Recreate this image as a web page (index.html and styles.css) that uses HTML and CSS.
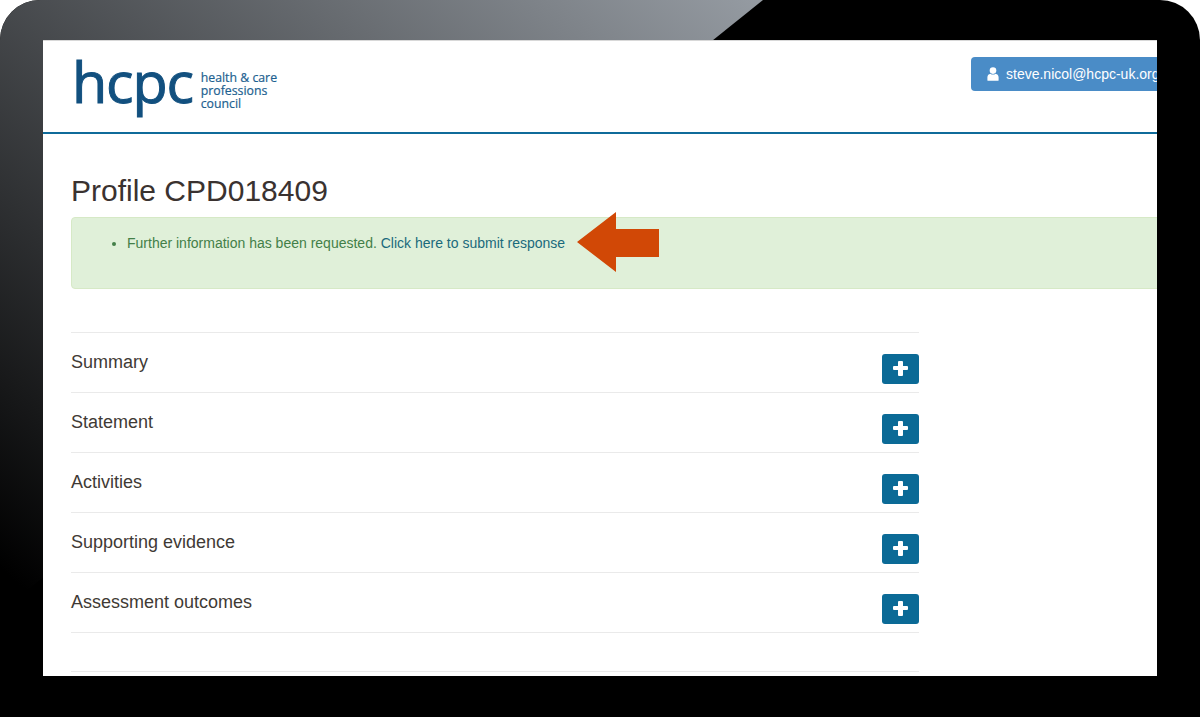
FILE: index.html
```html
<!DOCTYPE html>
<html lang="en">
<head>
<meta charset="utf-8">
<title>Profile CPD018409</title>
<link rel="stylesheet" href="styles.css">
</head>
<body>
<div class="frame">
  <svg class="sheen" width="1200" height="717" viewBox="0 0 1200 717" aria-hidden="true">
    <defs>
      <linearGradient id="sheen" gradientUnits="userSpaceOnUse" x1="760" y1="0" x2="170" y2="710">
        <stop offset="0" stop-color="#959ba2"/>
        <stop offset="1" stop-color="#000"/>
      </linearGradient>
    </defs>
    <polygon points="0,0 763,0 0,612" fill="url(#sheen)"/>
  </svg>
  <div class="screen">
    <header class="topbar">
      <div class="logo">
        <span class="logo-mark">hcpc</span>
        <span class="logo-text">health &amp; care<br>professions<br>council</span>
      </div>
      <a class="user-btn" href="#">
        <svg class="user-icon" width="12" height="14" viewBox="0 0 12 14" aria-hidden="true">
          <circle cx="6" cy="3.6" r="3.3" fill="#fff"/>
          <path d="M0.4 13.2V10.2C0.4 8.2 1.8 7 3.4 6.7C4.2 7.3 5 7.6 6 7.6C7 7.6 7.8 7.3 8.6 6.7C10.2 7 11.6 8.2 11.6 10.2V13.2C11.6 13.6 11.3 13.8 11 13.8H1C0.7 13.8 0.4 13.6 0.4 13.2Z" fill="#fff"/>
        </svg>
        <span>steve.nicol@hcpc-uk.org</span>
      </a>
    </header>
    <main class="content">
      <h1 class="title">Profile CPD018409</h1>
      <div class="alert">
        <ul class="alert-list">
          <li>Further information has been requested. <a href="#">Click here to submit response</a></li>
        </ul>
      </div>
      <section class="accordion">
        <div class="row"><span class="row-label">Summary</span><button class="plus" type="button" aria-label="Expand"></button></div>
        <div class="row"><span class="row-label">Statement</span><button class="plus" type="button" aria-label="Expand"></button></div>
        <div class="row"><span class="row-label">Activities</span><button class="plus" type="button" aria-label="Expand"></button></div>
        <div class="row"><span class="row-label">Supporting evidence</span><button class="plus" type="button" aria-label="Expand"></button></div>
        <div class="row"><span class="row-label">Assessment outcomes</span><button class="plus" type="button" aria-label="Expand"></button></div>
      </section>
      <div class="tail"></div>
    </main>
    <svg class="arrow" width="84" height="60" viewBox="0 0 84 60" aria-hidden="true">
      <polygon points="0,30 39,0 39,17 82,17 82,45 39,45 39,60" fill="#d14806"/>
    </svg>
  </div>
</div>
</body>
</html>
```
FILE: styles.css
```css
* { box-sizing: border-box; }
html, body { margin: 0; padding: 0; background: #fff; }
body { font-family: "Liberation Sans", Arial, sans-serif; color: #333; width: 1200px; height: 717px; overflow: hidden; }

.frame {
  position: relative;
  width: 1200px;
  height: 717px;
  padding: 40px 43px 41px;
  background: #000;
  border-radius: 40px 40px 0 0;
  overflow: hidden;
}
.sheen { position: absolute; left: 0; top: 0; }

.screen {
  position: relative;
  width: 1114px;
  height: 636px;
  background: #fff;
  overflow: hidden;
}

.topbar {
  height: 94px;
  border-top: 1px solid #d8d8d8;
  border-bottom: 2px solid #0f6b9a;
  display: flex;
  justify-content: space-between;
  align-items: flex-start;
  padding-left: 29px;
}
.logo { display: flex; align-items: flex-start; color: #12507f; }
.logo-mark {
  font-family: "Open Sans", "Noto Sans", sans-serif;
  font-size: 57.5px;
  font-weight: 400;
  line-height: 60px;
  letter-spacing: -1.2px;
  margin-top: 10px;
  -webkit-text-stroke: 1px #12507f;
}
.logo-text {
  font-family: "Open Sans", "Noto Sans", sans-serif;
  font-size: 12.3px;
  font-weight: 400;
  line-height: 13px;
  margin: 30px 0 0 8px;
  color: #1d5f90;
  -webkit-text-stroke: 0.2px #1d5f90;
}
.user-btn {
  display: flex;
  align-items: center;
  flex: none;
  gap: 7px;
  width: 200px;
  height: 34px;
  margin: 16px -14px 0 0;
  padding-left: 16px;
  background: #4a8cc7;
  border-radius: 4px 0 0 4px;
  color: #fff;
  font-size: 14px;
  text-decoration: none;
  white-space: nowrap;
}
.user-icon { flex: none; }

.content { padding: 0 238px 0 28px; }
.title {
  margin: 0;
  padding-top: 40px;
  font-weight: 400;
  font-size: 30px;
  line-height: 33px;
  color: #3a3230;
}
.alert {
  width: 1100px;
  height: 72px;
  margin-top: 10px;
  background: #e0f0d9;
  border: 1px solid #d6e9c6;
  border-radius: 4px;
  color: #437f48;
  font-size: 14px;
  line-height: 20px;
}
.alert-list { margin: 0; padding: 15px 0 0 55px; }
.alert-list a { color: #1a6a7c; text-decoration: none; }

.accordion { margin-top: 43px; border-top: 1px solid #eaeaea; }
.row {
  height: 60px;
  border-bottom: 1px solid #eaeaea;
  display: flex;
  justify-content: space-between;
  align-items: flex-start;
}
.row-label { font-size: 18px; line-height: 20px; margin-top: 19px; color: #3f3a35; }
.plus {
  position: relative;
  width: 37px;
  height: 30px;
  margin-top: 21px;
  padding: 0;
  border: 0;
  border-radius: 3px;
  background: #0b6a96;
}
.plus::before, .plus::after {
  content: "";
  position: absolute;
  background: #fff;
  border-radius: 1px;
}
.plus::before { left: 11px; top: 12px; width: 15px; height: 4px; }
.plus::after { left: 16px; top: 7px; width: 5px; height: 15px; }

.tail { margin-top: 38px; border-top: 1px solid #eaeaea; }

.arrow { position: absolute; left: 534px; top: 172px; }
```
